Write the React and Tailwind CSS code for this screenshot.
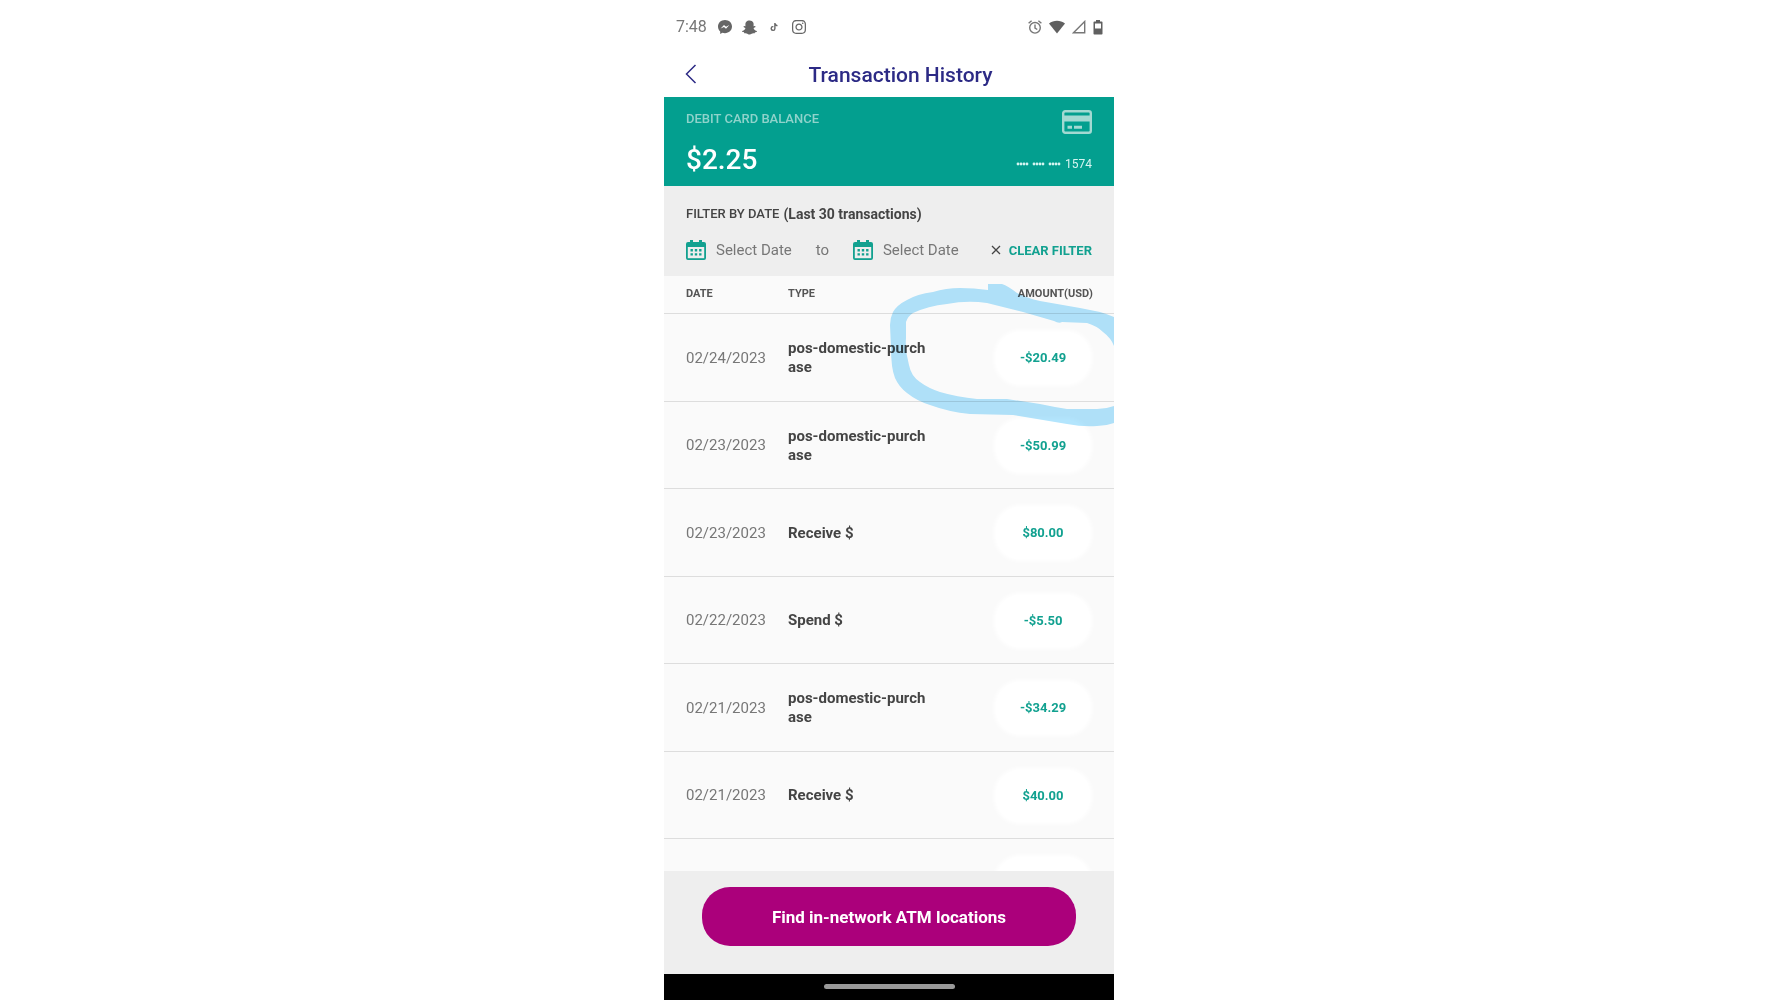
import React from "react";
import { FaSnapchatGhost, FaTiktok, FaInstagram } from "react-icons/fa";

const rows = [
  ["02/24/2023", "pos-domestic-purchase", "-$20.49"],
  ["02/23/2023", "pos-domestic-purchase", "-$50.99"],
  ["02/23/2023", "Receive $", "$80.00"],
  ["02/22/2023", "Spend $", "-$5.50"],
  ["02/21/2023", "pos-domestic-purchase", "-$34.29"],
  ["02/21/2023", "Receive $", "$40.00"],
  ["", "", ""],
];

function MessengerIcon() {
  return (
    <svg viewBox="0 0 14 14" className="size-[14px]" aria-hidden="true">
      <path d="M7 0C3.1 0 0 2.8 0 6.6c0 2 .8 3.700 2.200 4.900V14l2.200-1.200c.8.300 1.700.4 2.600.4 3.900 0 7-2.800 7-6.600S10.900 0 7 0Z" fill="#666" />
      <path d="M2.600 8.500 6 5l2 1.800L11.300 5 8 8.700 6 6.900Z" fill="#fff" />
    </svg>
  );
}

function AlarmIcon() {
  return (
    <svg viewBox="0 0 14 14" className="size-[14px]" fill="none" stroke="#777" strokeWidth="1.400" aria-hidden="true">
      <circle cx="7" cy="7.800" r="5.300" />
      <path d="M7 4.500V8l2.300 1.500M.6 3.300 3.600.8M13.400 3.300 10.400.8" />
    </svg>
  );
}

function WifiIcon() {
  return (
    <svg viewBox="0 0 16 14" className="h-[14px] w-4" fill="#606060" aria-hidden="true">
      <path d="M0 3.500C4.700-.3 11.300-.3 16 3.500L8 13.500Z" />
    </svg>
  );
}

function SignalIcon() {
  return (
    <svg viewBox="0 0 14 14" className="size-[14px]" fill="none" stroke="#777" strokeWidth="1.400" aria-hidden="true">
      <path d="M12.700 1.500V12.800H1.500Z" />
    </svg>
  );
}

function BatteryIcon() {
  return (
    <svg viewBox="0 0 10 15" className="h-[15px] w-[10px]" aria-hidden="true">
      <path d="M3 0h4v1.500h1.700c.5 0 .8.300.8.800v11.400c0 .5-.3.800-.8.800H1.300c-.5 0-.8-.3-.8-.8V2.300c0-.5.300-.8.800-.8H3Z" fill="#606060" />
      <path d="M2 3.500h6v5H2Z" fill="#fff" />
    </svg>
  );
}

function CardIcon() {
  return (
    <svg viewBox="0 0 30 24" className="h-6 w-[30px]" aria-hidden="true">
      <rect x="1.200" y="1.200" width="27.600" height="21.600" rx="2" fill="none" stroke="#a3d9d2" strokeWidth="2.400" />
      <path d="M1 5.500h28v6H1Z" fill="#a3d9d2" />
      <path d="M5.500 17.200h4.500M12 17.200h8" stroke="#a3d9d2" strokeWidth="3" />
    </svg>
  );
}

function CalendarIcon() {
  return (
    <svg viewBox="0 0 20 20" className="size-5" aria-hidden="true">
      <path d="M4 0h3v2h6V0h3v2h2a2 2 0 0 1 2 2v14a2 2 0 0 1-2 2H2a2 2 0 0 1-2-2V4a2 2 0 0 1 2-2h2Z" fill="#12a190" />
      <path d="M1.800 7h16.400v11.200H1.800Z" fill="#eee" />
      {[4.500, 8.800, 13.100].map((x) => (
        <path key={x} d={`M${x} 9h2.400v2.400h-2.400ZM${x} 13.200h2.400v2.400h-2.400Z`} fill="#12a190" />
      ))}
    </svg>
  );
}

function DateButton() {
  return (
    <button type="button" className="flex items-center gap-[10px] text-[15px] text-[#777]">
      <CalendarIcon />
      Select Date
    </button>
  );
}

export default function App() {
  return (
    <div className="min-h-screen bg-white font-['Roboto',sans-serif]">
      <main className="relative mx-auto flex h-screen w-full max-w-[450px] flex-col overflow-hidden">
        <div className="flex h-[54px] shrink-0 items-center justify-between pr-[11px] pl-3">
          <div className="flex items-center gap-[10px] text-[#666]">
            <span className="w-8 text-base text-[#777]">7:48</span>
            <MessengerIcon />
            <FaSnapchatGhost className="size-[15px]" />
            <span className="flex w-[14px] justify-center"><FaTiktok className="size-2" /></span>
            <FaInstagram className="size-4" />
          </div>
          <div className="flex items-center gap-[7px]">
            <AlarmIcon />
            <WifiIcon />
            <SignalIcon />
            <BatteryIcon />
          </div>
        </div>

        <header className="grid h-[43px] shrink-0 grid-cols-[24px_1fr] items-center pr-[22px] pb-1 pl-[21px]">
          <button type="button" aria-label="Back">
            <svg viewBox="0 0 12 20" className="h-5 w-3" fill="none" stroke="#2c2a85" strokeWidth="1.500" aria-hidden="true">
              <path d="M10.500 1 1.500 10l9 9" />
            </svg>
          </button>
          <h1 className="pt-1 text-center text-[21px] font-medium text-[#2c2a85]">Transaction History</h1>
        </header>

        <section className="flex h-[89px] shrink-0 justify-between bg-[#039f8f] px-[22px]">
          <div className="pt-3">
            <h2 className="text-[13px] leading-5 font-medium text-[#8fd3cb]">DEBIT CARD BALANCE</h2>
            <p className="mt-[13px] text-[28px] leading-9 font-medium text-white">$2.25</p>
          </div>
          <div className="flex flex-col items-end pt-[13px]">
            <CardIcon />
            <p className="mt-5 flex items-center gap-1 text-xs leading-5 text-[#d5f5f1]">
              <svg viewBox="0 0 45 4" className="h-1 w-[45px]" fill="#d5f5f1" role="img" aria-label="Hidden digits">
                {[0, 3, 6, 9, 16, 19, 22, 25, 32, 35, 38, 41].map((x) => <circle key={x} cx={x + 2} cy="2" r="1.400" />)}
              </svg>
              1574
            </p>
          </div>
        </section>

        <section className="h-[90px] shrink-0 bg-[#eee] px-[22px] pt-[18px]">
          <h2 className="flex gap-1 text-[13px] leading-5 font-medium text-[#444]">
            FILTER BY DATE <b className="text-sm leading-5 font-bold">(Last 30 transactions)</b>
          </h2>
          <div className="mt-[15px] flex items-center justify-between">
            <DateButton />
            <span className="text-[15px] text-[#777]">to</span>
            <DateButton />
            <button type="button" className="ml-2 flex items-center gap-2 text-[13px] font-bold text-[#12a190]">
              <svg viewBox="0 0 10 10" className="size-[10px]" stroke="#444" strokeWidth="1.300" aria-hidden="true">
                <path d="m1 1 8 8M9 1 1 9" />
              </svg>
              CLEAR FILTER
            </button>
          </div>
        </section>

        <div className="relative min-h-0 flex-1 overflow-hidden bg-[#fafafa]">
          <table className="w-full table-fixed border-collapse">
            <thead>
              <tr className="h-[37px] border-b border-[#ddd] text-[11px] font-bold text-[#555]">
                <th className="w-[124px] pl-[22px] text-left">DATE</th>
                <th className="text-left">TYPE</th>
                <th className="w-[140px] pr-[21px] text-right">AMOUNT(USD)</th>
              </tr>
            </thead>
            <tbody>
              {rows.map(([date, type, amount], i) => (
                <tr key={i} className="border-b border-[#ddd] odd:h-[88px] even:h-[87px]">
                  <td className="pt-[2px] pl-[22px] text-[15px] text-[#777]">{date}</td>
                  <td className="pt-[2px] text-[15px] leading-[19px] font-bold text-[#444]">
                    <div className="w-[142px] break-all">{type}</div>
                  </td>
                  <td className="pt-[2px] pr-[24px]">
                    <div className="ml-auto flex h-[52px] w-[94px] items-center justify-center rounded-[24px] bg-white text-[13px] font-bold text-[#12a190] shadow-[0_0_4px_2px_#fff]">{amount}</div>
                  </td>
                </tr>
              ))}
            </tbody>
          </table>
          <svg viewBox="0 0 225 152" className="pointer-events-none absolute top-0 right-0 h-[152px] w-[225px] mix-blend-multiply" fill="#b3e5fd" aria-hidden="true">
            <path d="M225 41Q218 38 211 36L191 32L151 25Q138 22 128 17Q119 10 113 8L99 8V14Q85 12 71 12Q57 12 44 16Q28 18 18 24Q8 29 4 36Q1 42 1 49L2 72Q2 92 6 102Q10 111 18 117Q28 125 41 129Q60 136 81 138L124 139L178 148Q194 151 208 150Q217 150 225 147V130Q217 133 208 133L178 133Q165 131 151 128L118 123L88 123Q68 121 51 116Q39 112 31 106Q22 100 20 89Q16 75 17 62V46Q19 40 24 37Q39 30 58 28Q78 24 98 27L134 36L165 45Q170 48 173 46L198 47Q208 50 214 56Q222 62 225 70Z" />
          </svg>
        </div>

        <footer className="shrink-0 bg-[#eee] px-[38px] pt-4 pb-7">
          <button type="button" className="h-[59px] w-full rounded-[28px] bg-[#ab007b] pt-[2px] text-[17px] font-bold text-white">
            Find in-network ATM locations
          </button>
        </footer>
        <div className="flex h-[26px] shrink-0 items-center justify-center bg-black pb-[2px]">
          <div className="h-[5px] w-[131px] rounded-full bg-[#999]" />
        </div>
      </main>
    </div>
  );
}
